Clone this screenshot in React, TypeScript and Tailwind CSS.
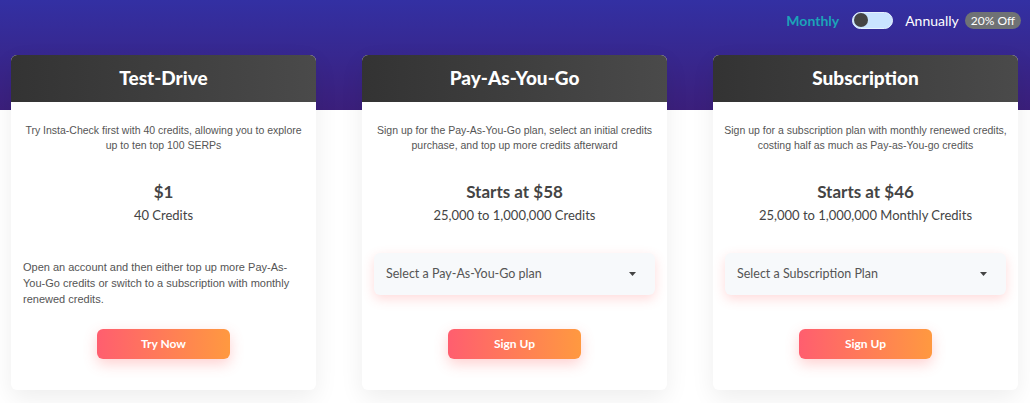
import React from 'react';

type Plan = {
  title: string;
  description: string;
  price: string;
  credits: string;
  note?: string;
  select?: string;
  cta: string;
};

const plans: Plan[] = [
  {
    title: 'Test-Drive',
    description: 'Try Insta-Check first with 40 credits, allowing you to explore up to ten top 100 SERPs',
    price: '$1',
    credits: '40 Credits',
    note: 'Open an account and then either top up more Pay-As-You-Go credits or switch to a subscription with monthly renewed credits.',
    cta: 'Try Now',
  },
  {
    title: 'Pay-As-You-Go',
    description: 'Sign up for the Pay-As-You-Go plan, select an initial credits purchase, and top up more credits afterward',
    price: 'Starts at $58',
    credits: '25,000 to 1,000,000 Credits',
    select: 'Select a Pay-As-You-Go plan',
    cta: 'Sign Up',
  },
  {
    title: 'Subscription',
    description: 'Sign up for a subscription plan with monthly renewed credits, costing half as much as Pay-as-You-go credits',
    price: 'Starts at $46',
    credits: '25,000 to 1,000,000 Monthly Credits',
    select: 'Select a Subscription Plan',
    cta: 'Sign Up',
  },
];

const BillingToggle: React.FC = () => (
  <div className="flex justify-end pr-[9px] pt-[11px] h-[55px] items-start font-['Lato',sans-serif]">
    <div className="flex items-center h-[18px]">
      <span className="text-[14px] font-bold text-[#1ba3b8]">Monthly</span>
      <button className="ml-[13px] w-[41px] h-[17px] rounded-full bg-[#c9e4ff] border border-[#e6f2ff] flex items-center px-[1px]">
        <span className="w-[14px] h-[14px] rounded-full bg-[#444]" />
      </button>
      <span className="ml-[12px] text-[14px] text-white">Annually</span>
      <span className="ml-[6px] h-[17px] px-[6px] rounded-full bg-[#6f7275] text-white text-[12px] leading-[17px] whitespace-nowrap">
        20% Off
      </span>
    </div>
  </div>
);

const PlanCard: React.FC<{ plan: Plan }> = ({ plan }) => (
  <div className="h-[335px] bg-white rounded-md shadow-[0_8px_24px_rgba(0,0,0,0.07)] flex flex-col overflow-hidden">
    <div className="h-[47px] flex items-center justify-center bg-[linear-gradient(to_right,#333333,#4a4a4a)]">
      <h2 className="text-white text-[19px] font-black font-['Lato',sans-serif]">{plan.title}</h2>
    </div>
    <div className="flex-1 flex flex-col px-[12px] pb-[31px]">
      <p className="mt-[21px] -mx-[3px] text-center text-[10.5px] leading-[15px] text-[#555] font-['Liberation_Sans',Arial,sans-serif]">
        {plan.description}
      </p>
      <div className="mt-[29px] text-center font-['Lato',sans-serif]">
        <div className="text-[17px] leading-[20px] font-bold text-[#444]">{plan.price}</div>
        <div className="mt-[4px] text-[13px] leading-[18px] text-[#444]">{plan.credits}</div>
      </div>
      {plan.note && (
        <p className="mt-[35px] text-[11px] leading-[16px] text-[#555] font-['Liberation_Sans',Arial,sans-serif]">
          {plan.note}
        </p>
      )}
      {plan.select && (
        <div className="mt-[29px] h-[42px] rounded-md bg-[#f7f9fb] shadow-[0_4px_12px_rgba(255,90,90,0.22)] flex items-center justify-between pl-[12px] pr-[19px] font-['Lato',sans-serif]">
          <span className="text-[12.5px] text-[#555]">{plan.select}</span>
          <svg width="7" height="4" viewBox="0 0 7 4">
            <path d="M0 0h7L3.5 4z" fill="#444" />
          </svg>
        </div>
      )}
      <div className="mt-auto flex justify-center">
        <button className="w-[133px] h-[30px] rounded-md bg-[linear-gradient(to_right,#ff5e6f,#ff9940)] shadow-[0_5px_14px_rgba(255,100,100,0.3)] text-white text-[12px] font-bold font-['Lato',sans-serif]">
          {plan.cta}
        </button>
      </div>
    </div>
  </div>
);

export default function App() {
  return (
    <div className="w-[1030px] h-[403px] overflow-hidden bg-[linear-gradient(to_bottom,#3330a3_0px,#3b1f7b_110px,#ffffff_110px,#ffffff_100%)]">
      <BillingToggle />
      <div className="grid grid-cols-3 gap-[46px] pl-[11px] pr-[12px]">
        {plans.map((p) => (
          <PlanCard key={p.title} plan={p} />
        ))}
      </div>
    </div>
  );
}
